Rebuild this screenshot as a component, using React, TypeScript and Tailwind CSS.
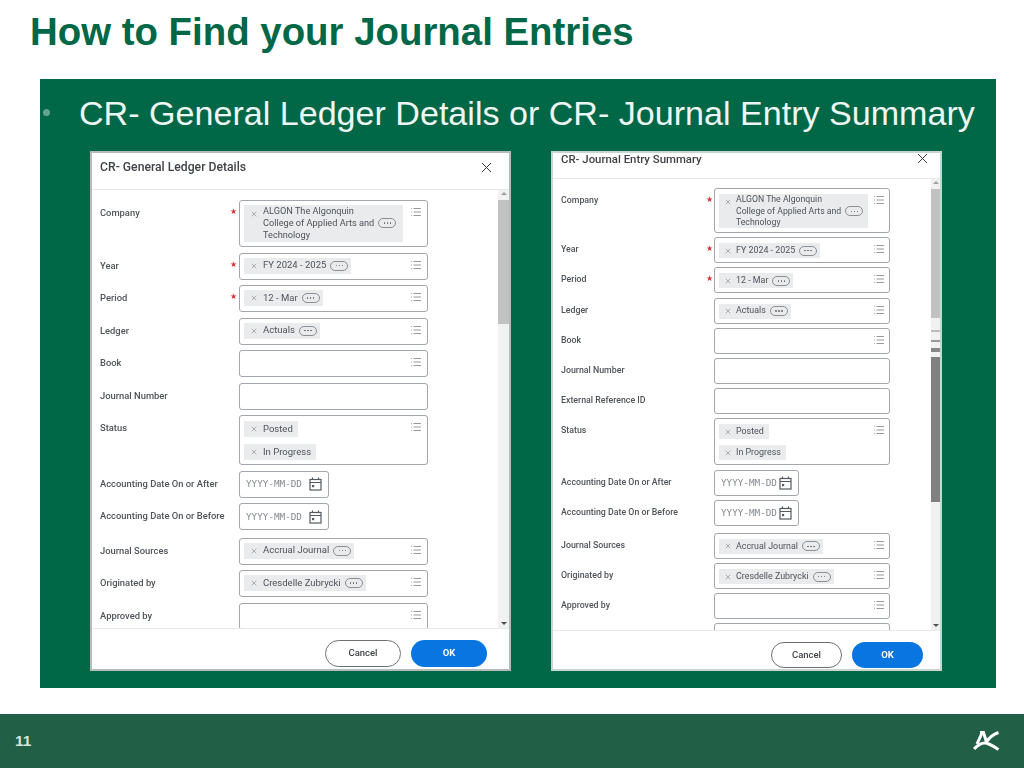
import { List, X } from "lucide-react"

type Field = {
  label: string
  required?: boolean
  tags?: string[]
  kind?: "company" | "status" | "date" | "text" | "prompt"
  pushed?: boolean
}

const LEDGER_ROWS: Field[] = [
  { label: "Company", required: true, kind: "company" },
  { label: "Year", required: true, tags: ["FY 2024 - 2025"] },
  { label: "Period", required: true, tags: ["12 - Mar"] },
  { label: "Ledger", tags: ["Actuals"] },
  { label: "Book" },
  { label: "Journal Number", kind: "text" },
  { label: "Status", kind: "status" },
  { label: "Accounting Date On or After", kind: "date" },
  { label: "Accounting Date On or Before", kind: "date" },
  { label: "Journal Sources", tags: ["Accrual Journal"], pushed: true },
  { label: "Originated by", tags: ["Cresdelle Zubrycki"] },
  { label: "Approved by" },
]

const SUMMARY_ROWS: Field[] = [
  { label: "Company", required: true, kind: "company" },
  { label: "Year", required: true, tags: ["FY 2024 - 2025"] },
  { label: "Period", required: true, tags: ["12 - Mar"] },
  { label: "Ledger", tags: ["Actuals"] },
  { label: "Book" },
  { label: "Journal Number", kind: "text" },
  { label: "External Reference ID", kind: "text" },
  { label: "Status", kind: "status" },
  { label: "Accounting Date On or After", kind: "date" },
  { label: "Accounting Date On or Before", kind: "date" },
  { label: "Journal Sources", tags: ["Accrual Journal"], pushed: true },
  { label: "Originated by", tags: ["Cresdelle Zubrycki"] },
  { label: "Approved by" },
  { label: "" },
]

function Pill() {
  return (
    <span className="ml-[4px] inline-flex h-[10px] w-[18px] shrink-0 items-center justify-center gap-[1.5px] rounded-full border border-[#8a8f94] align-middle">
      <i className="h-[1.5px] w-[1.5px] rounded-full bg-[#666]" />
      <i className="h-[1.5px] w-[1.5px] rounded-full bg-[#666]" />
      <i className="h-[1.5px] w-[1.5px] rounded-full bg-[#666]" />
    </span>
  )
}

function CalendarIcon() {
  return (
    <svg width="13" height="14" viewBox="0 0 13 14" fill="none" stroke="#555a5f" strokeWidth="1.2">
      <rect x="1" y="2.5" width="11" height="10.5" />
      <path d="M1 5.5h11M3.5 0.5v2M9.5 0.5v2" />
      <rect x="3" y="8" width="2.2" height="2.2" fill="#555a5f" stroke="none" />
    </svg>
  )
}

function Tag({ text, pill = true, compact }: { text: string; pill?: boolean; compact: boolean }) {
  return (
    <div className={`flex w-fit items-center bg-[#e9ebed] pr-[3px] ${compact ? "h-[15px] pl-[5px]" : "h-[16px] pl-[6px]"}`}>
      <X size={8} strokeWidth={1.5} className={`shrink-0 text-[#6b7076] ${compact ? "mr-[4px]" : "mr-[5px]"}`} />
      <span className="whitespace-nowrap">{text}</span>
      {pill ? <Pill /> : <span className="w-[2px]" />}
    </div>
  )
}

function Row({ field, compact }: { field: Field; compact: boolean }) {
  const kind = field.kind ?? "prompt"
  const heights = compact
    ? { company: "h-[45px]", status: "h-[47px]", other: "h-[26px]" }
    : { company: "h-[47px]", status: "h-[50px]", other: "h-[27px]" }
  const height = kind === "company" ? heights.company : kind === "status" ? heights.status : heights.other
  const width = kind === "date" ? (compact ? "w-[85px]" : "w-[90px]") : compact ? "w-[176px]" : "w-[189px]"
  const push = field.pushed ? (compact ? "mt-[3px]" : "mt-[2px]") : ""

  return (
    <div className={`flex items-start ${push}`}>
      <div className={`shrink-0 pt-[6px] font-medium ${compact ? "w-[145px] text-[8.8px]" : "w-[130px] text-[9.4px]"}`}>{field.label}</div>
      <div className={`shrink-0 pt-[7px] text-[8px] leading-[10px] text-[#d8353a] ${compact ? "w-[8px]" : "w-[9px]"}`}>
        {field.required ? "★" : ""}
      </div>
      <div className={`relative shrink-0 rounded-[3px] border border-[#a3a7ab] bg-white ${height} ${width}`}>
        {kind === "date" && (
          <div className="flex h-full items-center justify-between pl-[6px] pr-[6px]">
            <span className="font-['DejaVu_Sans_Mono',monospace] text-[9.3px] text-[#85898e]">YYYY-MM-DD</span>
            <CalendarIcon />
          </div>
        )}
        {kind === "company" && (
          <div className={`absolute flex items-start bg-[#e9ebed] ${compact ? "left-[4px] top-[5px] h-[34px] w-[149px] pl-[5px] text-[8.7px]" : "left-[4px] top-[4px] h-[37px] w-[159px] pl-[6px] text-[9.2px]"}`}>
            <X size={8} strokeWidth={1.5} className={`shrink-0 text-[#6b7076] ${compact ? "mr-[4px] mt-[4px]" : "mr-[5px] mt-[5px]"}`} />
            <div className={compact ? "leading-[11.5px]" : "leading-[12px]"}>
              <div>ALGON The Algonquin</div>
              <div className="flex items-center whitespace-nowrap">College of Applied Arts and<Pill /></div>
              <div>Technology</div>
            </div>
          </div>
        )}
        {kind === "status" && (
          <div className={`absolute left-[4px] flex flex-col ${compact ? "top-[5px] gap-[6px]" : "top-[5px] gap-[7px]"}`}>
            <Tag text="Posted" pill={false} compact={compact} />
            <Tag text="In Progress" pill={false} compact={compact} />
          </div>
        )}
        {field.tags && (
          <div className={`absolute left-[4px] ${compact ? "top-[5px]" : "top-[4px]"}`}>
            <Tag text={field.tags[0]} compact={compact} />
          </div>
        )}
        {kind !== "date" && kind !== "text" && (
          <List size={12} strokeWidth={1.25} className={`absolute top-[5px] text-[#555a5f] ${compact ? "right-[4px]" : "right-[5px]"}`} />
        )}
      </div>
    </div>
  )
}

function Dialog({ title, rows, compact, children }: { title: string; rows: Field[]; compact: boolean; children: React.ReactNode }) {
  return (
    <div className={`flex h-[520px] flex-col border-2 bg-white font-['Roboto',sans-serif] text-[#4f5459] blur-[0.35px] ${compact ? "w-[391px] border-[#c9d6d0] text-[8.9px]" : "w-[421px] border-[#b5bbb9] text-[9.5px]"}`}>
      <div className={`relative flex shrink-0 border-b border-[#e6e8ea] pl-[8px] font-medium text-[#3f4347] ${compact ? "h-[26px] items-start text-[11.4px] leading-[12px]" : "h-[37px] items-start pt-[6px] text-[12.2px] leading-[16px]"}`}>
        {title}
        <X size={17} strokeWidth={1.4} className={`absolute text-[#333] ${compact ? "right-[9px] top-[-3px]" : "right-[14px] top-[6px]"}`} />
      </div>
      <div className="relative min-h-0 flex-1 overflow-hidden">
        <div className={`flex flex-col pl-[8px] ${compact ? "gap-[4.2px] pt-[9px]" : "gap-[5.5px] pt-[10px]"}`}>
          {rows.map((r, i) => (
            <Row key={i} field={r} compact={compact} />
          ))}
        </div>
        {children}
      </div>
      <div className={`flex shrink-0 items-start justify-end border-t border-[#e6e8ea] pt-[11px] text-[9.5px] font-medium ${compact ? "h-[39px] gap-[10px] pr-[17px]" : "h-[41px] gap-[10px] pr-[22px]"}`}>
        <div className={`flex items-center justify-center rounded-full border border-[#6d7176] text-[#3f4347] ${compact ? "h-[26px] w-[71px]" : "h-[27px] w-[76px]"}`}>Cancel</div>
        <div className={`flex items-center justify-center rounded-full bg-[#0875e1] font-bold text-white ${compact ? "h-[26px] w-[71px]" : "h-[27px] w-[76px]"}`}>OK</div>
      </div>
    </div>
  )
}

export default function App() {
  return (
    <div className="flex h-[768px] w-[1024px] flex-col overflow-hidden bg-white font-['Liberation_Sans',sans-serif]">
      <div className="h-[79px] shrink-0 pl-[30px] pt-[11px] text-[38.4px] font-bold leading-[41px] text-[#006747]">
        How to Find your Journal Entries
      </div>

      <div className="ml-[40px] mr-[28px] flex h-[609px] shrink-0 flex-col bg-[#006747]">
        <div className="flex h-[72px] shrink-0 items-start">
          <span className="ml-[3px] mt-[30px] h-[7px] w-[7px] rounded-full bg-[#66a491]" />
          <span className="ml-[29px] mt-[14px] whitespace-nowrap text-[34.1px] leading-[40px] text-[#eef6f3]">
            CR- General Ledger Details or CR- Journal Entry Summary
          </span>
        </div>
        <div className="flex gap-[40px] pl-[50px]">
          <Dialog title="CR- General Ledger Details" rows={LEDGER_ROWS} compact={false}>
            <div className="absolute bottom-0 right-0 top-0 w-[11px] bg-[#f1f1f1]">
              <div className="mt-[10px] h-[124px] w-full bg-[#c1c1c1]" />
              <span className="absolute left-[3px] top-[2px] h-0 w-0 border-x-[3px] border-b-[3px] border-x-transparent border-b-[#a0a0a0]" />
              <span className="absolute bottom-[3px] left-[3px] h-0 w-0 border-x-[3px] border-t-[3px] border-x-transparent border-t-[#505050]" />
            </div>
          </Dialog>
          <Dialog title="CR- Journal Entry Summary" rows={SUMMARY_ROWS} compact>
            <div className="absolute bottom-0 right-0 top-0 w-[9px] bg-[#f1f1f1]">
              <div className="mt-[10px] h-[129px] w-full bg-[#c1c1c1]" />
              <div className="mt-[12px] h-[2px] w-full bg-[#bbbbbb]" />
              <div className="mt-[8px] h-[2px] w-full bg-[#999999]" />
              <div className="mt-[6px] h-[4px] w-full bg-[#888888]" />
              <div className="mt-[5px] h-[145px] w-full bg-[#808080]" />
              <span className="absolute left-[2px] top-[2px] h-0 w-0 border-x-[3px] border-b-[3px] border-x-transparent border-b-[#a0a0a0]" />
              <span className="absolute bottom-[3px] left-[2px] h-0 w-0 border-x-[3px] border-t-[3px] border-x-transparent border-t-[#505050]" />
            </div>
          </Dialog>
        </div>
      </div>

      <div className="mt-[26px] flex h-[54px] shrink-0 items-center justify-between bg-[#215f46] pl-[15px] pr-[23px]">
        <span className="text-[15.5px] font-bold text-[#d5e4dd]">11</span>
        <svg width="28" height="20" viewBox="0 0 28 20" fill="none" stroke="white" strokeWidth="3">
          <path d="M7 1.5H10.5L13.5 11" />
          <path d="M9 2L4 13" />
          <path d="M1 18C6 12.5 10 11.5 13 12C17 13 20 15 25.5 18.5" />
          <path d="M25.5 1.5C20 3.5 16 7 13.5 11" />
        </svg>
      </div>
    </div>
  )
}
